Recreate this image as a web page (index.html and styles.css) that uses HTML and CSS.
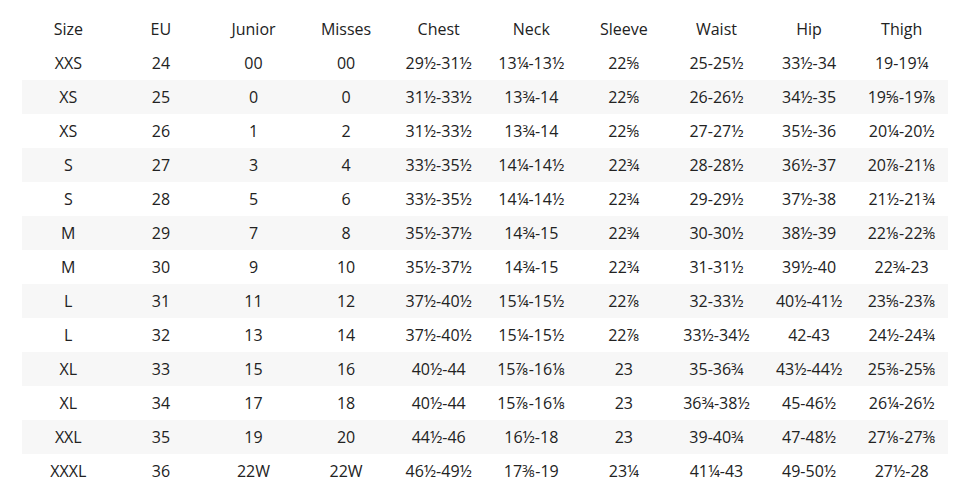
FILE: index.html
```html
<!DOCTYPE html>
<html>
<head>
<meta charset="utf-8">
<link rel="stylesheet" href="styles.css">
</head>
<body>
<table class="size-table">
<thead>
<tr><th>Size</th><th>EU</th><th>Junior</th><th>Misses</th><th>Chest</th><th>Neck</th><th>Sleeve</th><th>Waist</th><th>Hip</th><th>Thigh</th></tr>
</thead>
<tbody>
<tr><td>XXS</td><td>24</td><td>00</td><td>00</td><td>29½-31½</td><td>13¼-13½</td><td>22⅝</td><td>25-25½</td><td>33½-34</td><td>19-19¼</td></tr>
<tr><td>XS</td><td>25</td><td>0</td><td>0</td><td>31½-33½</td><td>13¾-14</td><td>22⅝</td><td>26-26½</td><td>34½-35</td><td>19⅝-19⅞</td></tr>
<tr><td>XS</td><td>26</td><td>1</td><td>2</td><td>31½-33½</td><td>13¾-14</td><td>22⅝</td><td>27-27½</td><td>35½-36</td><td>20¼-20½</td></tr>
<tr><td>S</td><td>27</td><td>3</td><td>4</td><td>33½-35½</td><td>14¼-14½</td><td>22¾</td><td>28-28½</td><td>36½-37</td><td>20⅞-21⅛</td></tr>
<tr><td>S</td><td>28</td><td>5</td><td>6</td><td>33½-35½</td><td>14¼-14½</td><td>22¾</td><td>29-29½</td><td>37½-38</td><td>21½-21¾</td></tr>
<tr><td>M</td><td>29</td><td>7</td><td>8</td><td>35½-37½</td><td>14¾-15</td><td>22¾</td><td>30-30½</td><td>38½-39</td><td>22⅛-22⅜</td></tr>
<tr><td>M</td><td>30</td><td>9</td><td>10</td><td>35½-37½</td><td>14¾-15</td><td>22¾</td><td>31-31½</td><td>39½-40</td><td>22¾-23</td></tr>
<tr><td>L</td><td>31</td><td>11</td><td>12</td><td>37½-40½</td><td>15¼-15½</td><td>22⅞</td><td>32-33½</td><td>40½-41½</td><td>23⅝-23⅞</td></tr>
<tr><td>L</td><td>32</td><td>13</td><td>14</td><td>37½-40½</td><td>15¼-15½</td><td>22⅞</td><td>33½-34½</td><td>42-43</td><td>24½-24¾</td></tr>
<tr><td>XL</td><td>33</td><td>15</td><td>16</td><td>40½-44</td><td>15⅞-16⅛</td><td>23</td><td>35-36¾</td><td>43½-44½</td><td>25⅜-25⅝</td></tr>
<tr><td>XL</td><td>34</td><td>17</td><td>18</td><td>40½-44</td><td>15⅞-16⅛</td><td>23</td><td>36¾-38½</td><td>45-46½</td><td>26¼-26½</td></tr>
<tr><td>XXL</td><td>35</td><td>19</td><td>20</td><td>44½-46</td><td>16½-18</td><td>23</td><td>39-40¾</td><td>47-48½</td><td>27⅛-27⅜</td></tr>
<tr><td>XXXL</td><td>36</td><td>22W</td><td>22W</td><td>46½-49½</td><td>17⅜-19</td><td>23¼</td><td>41¼-43</td><td>49-50½</td><td>27½-28</td></tr>
</tbody>
</table>
</body>
</html>
```
FILE: styles.css
```css
html, body {
  margin: 0;
  padding: 0;
  background: #fff;
}
body {
  padding: 12px 0 0 22px;
  font-family: "Open Sans", "Noto Sans", sans-serif;
  color: #222;
}
.size-table {
  width: 926px;
  table-layout: fixed;
  border-collapse: collapse;
  font-size: 16px;
}
.size-table th,
.size-table td {
  height: 34px;
  padding: 0;
  text-align: center;
  vertical-align: middle;
  font-weight: 400;
}
.size-table tbody tr:nth-child(even) {
  background: #f7f7f7;
}
```
